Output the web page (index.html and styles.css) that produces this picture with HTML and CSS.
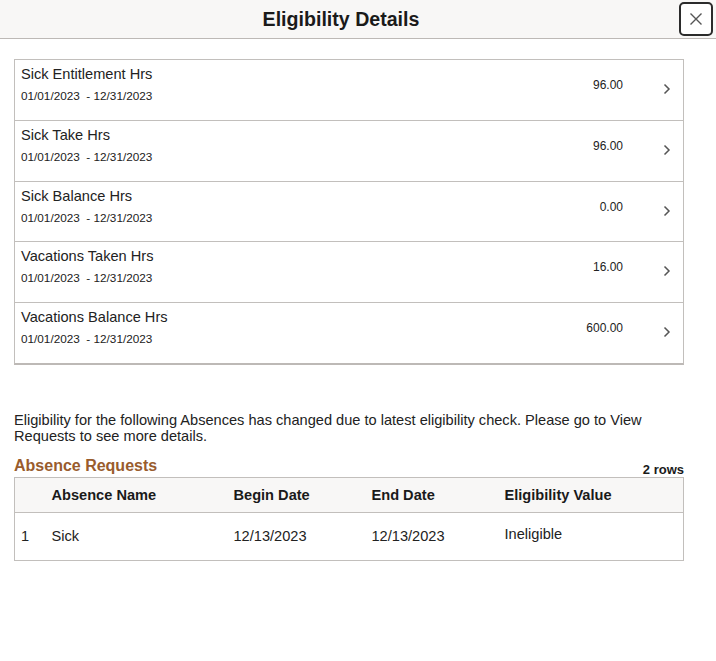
FILE: index.html
```html
<!DOCTYPE html>
<html>
<head>
<meta charset="utf-8">
<link rel="stylesheet" href="styles.css">
</head>
<body>
<header class="hdr">
  <h1 class="title">Eligibility Details</h1>
  <button class="close" aria-label="Close">
    <svg width="14" height="14" viewBox="0 0 14 14"><path d="M1.5 1.5 L12.5 12.5 M12.5 1.5 L1.5 12.5" stroke="#555" stroke-width="1.4" fill="none"/></svg>
  </button>
</header>
<main class="content">
  <ul class="list">
    <li class="row"><div class="info"><div class="name">Sick Entitlement Hrs</div><div class="dates">01/01/2023&nbsp; - 12/31/2023</div></div><div class="val">96.00</div><span class="chev"><svg width="8" height="12" viewBox="0 0 8 12"><path d="M1.5 1.5 L6 6 L1.5 10.5" stroke="#555" stroke-width="1.5" fill="none"/></svg></span></li>
    <li class="row"><div class="info"><div class="name">Sick Take Hrs</div><div class="dates">01/01/2023&nbsp; - 12/31/2023</div></div><div class="val">96.00</div><span class="chev"><svg width="8" height="12" viewBox="0 0 8 12"><path d="M1.5 1.5 L6 6 L1.5 10.5" stroke="#555" stroke-width="1.5" fill="none"/></svg></span></li>
    <li class="row"><div class="info"><div class="name">Sick Balance Hrs</div><div class="dates">01/01/2023&nbsp; - 12/31/2023</div></div><div class="val">0.00</div><span class="chev"><svg width="8" height="12" viewBox="0 0 8 12"><path d="M1.5 1.5 L6 6 L1.5 10.5" stroke="#555" stroke-width="1.5" fill="none"/></svg></span></li>
    <li class="row"><div class="info"><div class="name">Vacations Taken Hrs</div><div class="dates">01/01/2023&nbsp; - 12/31/2023</div></div><div class="val">16.00</div><span class="chev"><svg width="8" height="12" viewBox="0 0 8 12"><path d="M1.5 1.5 L6 6 L1.5 10.5" stroke="#555" stroke-width="1.5" fill="none"/></svg></span></li>
    <li class="row"><div class="info"><div class="name">Vacations Balance Hrs</div><div class="dates">01/01/2023&nbsp; - 12/31/2023</div></div><div class="val">600.00</div><span class="chev"><svg width="8" height="12" viewBox="0 0 8 12"><path d="M1.5 1.5 L6 6 L1.5 10.5" stroke="#555" stroke-width="1.5" fill="none"/></svg></span></li>
  </ul>
  <p class="msg">Eligibility for the following Absences has changed due to latest eligibility check. Please go to View Requests to see more details.</p>
  <div class="gridhead">
    <h2 class="gtitle">Absence Requests</h2>
    <span class="count">2 rows</span>
  </div>
  <table class="grid">
    <thead>
      <tr><th class="c0"></th><th class="c1">Absence Name</th><th class="c2">Begin Date</th><th class="c3">End Date</th><th class="c4">Eligibility Value</th></tr>
    </thead>
    <tbody>
      <tr><td class="c0">1</td><td class="c1">Sick</td><td class="c2">12/13/2023</td><td class="c3">12/13/2023</td><td class="c4 elig">Ineligible</td></tr>
    </tbody>
  </table>
</main>
</body>
</html>
```
FILE: styles.css
```css
* { box-sizing: border-box; }
html, body { margin: 0; padding: 0; background: #fff; }
body { font-family: "Liberation Sans", Arial, sans-serif; color: #1a1a1a; width: 716px; }

.hdr {
  height: 39px;
  background: #f8f7f6;
  border-bottom: 1px solid #bdb9b6;
  display: flex;
  align-items: center;
  justify-content: center;
  position: relative;
  padding: 1px 34px 0 0;
}
.title { margin: 0; font-size: 19.6px; font-weight: bold; color: #1a1a1a; line-height: 1; }
.close {
  position: absolute;
  right: 3px;
  top: 2px;
  width: 34px;
  height: 34px;
  border: 2px solid #2b2b2b;
  border-radius: 5px;
  background: #fff;
  display: flex;
  align-items: center;
  justify-content: center;
  padding: 0;
}

.content { padding: 20px 32px 0 14px; }

.list {
  list-style: none;
  margin: 0;
  padding: 0;
  border-left: 1px solid #c2bfbc;
  border-right: 1px solid #c2bfbc;
  border-bottom: 2px solid #bdb9b6;
}
.row {
  display: flex;
  align-items: flex-start;
  height: 60.75px;
  border-top: 1px solid #c2bfbc;
  padding: 6px 0 0 6px;
}
.info { flex: 1; }
.name { font-size: 14.6px; line-height: 16px; color: #222; }
.dates { font-size: 11.75px; line-height: 14px; margin-top: 7px; color: #222; }
.val { font-size: 12px; margin-top: 12px; color: #222; }
.chev { width: 60px; display: flex; justify-content: center; margin-top: 17px; padding-left: 28px; }

.msg { margin: 47px 0 0 0; font-size: 14.6px; line-height: 16px; color: #222; width: 670px; }

.gridhead { display: flex; justify-content: space-between; align-items: flex-end; margin-top: 13px; width: 670px; }
.gtitle { margin: 0; font-size: 16px; font-weight: bold; color: #995c2d; line-height: 18px; }
.count { font-size: 13px; font-weight: bold; color: #1a1a1a; line-height: 14px; margin-bottom: -2px; }

.grid {
  margin-top: 2px;
  width: 670px;
  border-collapse: collapse;
  border: 1px solid #c2bfbc;
  font-size: 14.6px;
}
.grid th {
  background: #f8f7f6;
  text-align: left;
  font-weight: bold;
  height: 35px;
  padding: 0;
  border-bottom: 1px solid #c2bfbc;
  color: #1a1a1a;
}
.grid td { height: 48px; padding: 0; color: #222; vertical-align: middle; }
.c0 { width: 37px; padding-left: 6px !important; }
.c1 { width: 182px; }
.c2 { width: 138px; }
.c3 { width: 133px; }
.elig { padding-bottom: 4px !important; }
```
